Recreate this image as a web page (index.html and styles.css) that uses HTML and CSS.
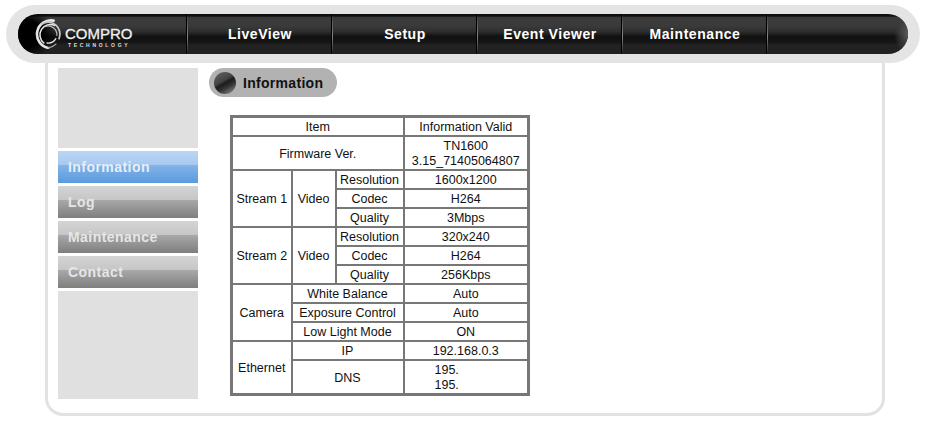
FILE: index.html
```html
<!DOCTYPE html>
<html lang="en">
<head>
    <meta charset="UTF-8">
    <title>Information</title>
    <link rel="stylesheet" href="styles.css">
</head>
<body>
    <div class="top-band">
        <div class="top-bar">
            <div class="logo">
                <svg class="logo-mark" width="30" height="30" viewBox="1 1 27.5 27.5" fill="none" stroke="#e4e4e4" stroke-linecap="round">
                    <path d="M19 2.5A12.5 12.5 0 0 0 14 27.5" stroke-width="2.4"/>
                    <path d="M8 5.5A11 11 0 0 1 24 19" stroke-width="1.6" stroke="#c8c8c8"/>
                    <path d="M21 24A11.5 11.5 0 0 1 14 27.5" stroke-width="1.2" stroke="#aaa"/>
                    <path d="M20 7A9.5 9.5 0 0 0 10 23" stroke-width="1.4"/>
                    <path d="M11 8A8 8 0 0 1 22 16" stroke-width="1.1" stroke="#bbb"/>
                    <path d="M21 19A8 8 0 0 1 13 23" stroke-width="1.2"/>
                </svg>
                <div class="logo-text">
                    <span class="logo-name">COMPRO</span>
                    <span class="logo-sub">TECHNOLOGY</span>
                </div>
            </div>
            <a class="top-link">LiveView</a>
            <a class="top-link">Setup</a>
            <a class="top-link">Event Viewer</a>
            <a class="top-link">Maintenance</a>
            <div class="top-rest"></div>
        </div>
    </div>

    <div class="frame">
        <div class="side">
            <div class="side-fill side-fill-top"></div>
            <a class="side-btn active">Information</a>
            <a class="side-btn">Log</a>
            <a class="side-btn">Maintenance</a>
            <a class="side-btn">Contact</a>
            <div class="side-fill"></div>
        </div>
        <div class="main">
            <div class="title-pill">
                <span class="ball"></span>
                <span>Information</span>
            </div>
            <table class="info">
                <colgroup>
                    <col class="col-a"><col class="col-b"><col class="col-c"><col class="col-d">
                </colgroup>
                <tr>
                    <td colspan="3">Item</td>
                    <td>Information Valid</td>
                </tr>
                <tr class="tall">
                    <td colspan="3">Firmware Ver.</td>
                    <td>TN1600<br>3.15_71405064807</td>
                </tr>
                <tr>
                    <td rowspan="3">Stream 1</td>
                    <td rowspan="3">Video</td>
                    <td>Resolution</td>
                    <td>1600x1200</td>
                </tr>
                <tr><td>Codec</td><td>H264</td></tr>
                <tr><td>Quality</td><td>3Mbps</td></tr>
                <tr>
                    <td rowspan="3">Stream 2</td>
                    <td rowspan="3">Video</td>
                    <td>Resolution</td>
                    <td>320x240</td>
                </tr>
                <tr><td>Codec</td><td>H264</td></tr>
                <tr><td>Quality</td><td>256Kbps</td></tr>
                <tr>
                    <td rowspan="3">Camera</td>
                    <td colspan="2">White Balance</td>
                    <td>Auto</td>
                </tr>
                <tr><td colspan="2">Exposure Control</td><td>Auto</td></tr>
                <tr><td colspan="2">Low Light Mode</td><td>ON</td></tr>
                <tr>
                    <td rowspan="2">Ethernet</td>
                    <td colspan="2">IP</td>
                    <td>192.168.0.3</td>
                </tr>
                <tr class="tall">
                    <td colspan="2">DNS</td>
                    <td class="dns">195.<br>195.</td>
                </tr>
            </table>
        </div>
    </div>
</body>
</html>
```

FILE: styles.css
```css
html, body {
    margin: 0;
    padding: 0;
    height: 423px;
    overflow: hidden;
    background: #fff;
    font-family: "Liberation Sans", Arial, sans-serif;
}
.top-band {
    box-sizing: border-box;
    margin: 5px 6px 0;
    width: 914px;
    height: 58px;
    padding: 9px 12px;
    background: #e4e4e4;
    border-radius: 29px;
}
.top-bar {
    display: flex;
    height: 40px;
    border-radius: 20px;
    overflow: hidden;
    background: linear-gradient(#0c0c0c 0, #111 5%, #3c3c3c 9%, #3a3a3a 30%, #2e2e2e 44%, #2a2a2a 46%, #111 56%, #151515 70%, #222 78%, #222 100%);
}
.logo {
    box-sizing: border-box;
    width: 168px;
    display: flex;
    align-items: flex-start;
    gap: 1px;
    padding: 5px 0 0 16px;
    background: radial-gradient(ellipse 40px 26px at 0 50%, #000 60%, rgba(0, 0, 0, 0) 100%);
}
.logo-mark {
    flex: none;
}
.logo-text {
    display: flex;
    flex-direction: column;
    color: #f0f0f0;
    margin-top: 8px;
}
.logo-name {
    font-size: 15px;
    line-height: 14px;
    -webkit-text-stroke: 0.3px #f0f0f0;
}
.logo-sub {
    font-size: 5px;
    line-height: 6px;
    font-weight: bold;
    letter-spacing: 2.7px;
    margin: 1px 0 0 3px;
    color: #ddd;
}
.top-link, .top-rest {
    box-sizing: border-box;
    border-left: 1px solid #000;
    background: linear-gradient(rgba(120, 120, 120, 0), #888 55%, rgba(120, 120, 120, 0)) 0 0 / 1px 100% no-repeat;
}
.top-link {
    width: 145px;
    padding-left: 2px;
    color: #fff;
    font-size: 14px;
    font-weight: bold;
    letter-spacing: 0.55px;
    line-height: 40px;
    text-align: center;
}
.top-rest {
    flex: 1;
    position: relative;
}
.top-rest::after {
    content: "";
    position: absolute;
    top: 0;
    right: 0;
    width: 32px;
    height: 100%;
    background: radial-gradient(ellipse 14px 20px at 100% 50%, #5a5a5a 0, rgba(60, 60, 60, 0.6) 70%, rgba(0, 0, 0, 0) 100%);
}

.frame {
    box-sizing: border-box;
    display: flex;
    width: 840px;
    height: 353px;
    margin-left: 45px;
    padding: 5px 10px;
    border: 3px solid #e2e2e2;
    border-top: none;
    border-radius: 0 0 18px 18px;
}
.side {
    width: 140px;
    display: flex;
    flex-direction: column;
    gap: 3px;
}
.side-fill {
    height: 108px;
    background: #e0e0e0;
}
.side-fill-top {
    height: 80px;
}
.side-btn {
    height: 32px;
    padding-left: 10px;
    font-size: 14px;
    font-weight: bold;
    letter-spacing: 0.45px;
    line-height: 32px;
    color: #e6e6e6;
    background: linear-gradient(#d4d4d4 0, #c6c6c6 44%, #a8a8a8 45%, #7e7e7e 100%);
}
.side-btn.active {
    color: #e6eef8;
    background: linear-gradient(#bcd6f4 0, #a6c8f0 44%, #83b3e8 45%, #5a9ade 100%);
}
.main {
    margin-left: 11px;
}
.title-pill {
    box-sizing: border-box;
    width: 128px;
    height: 29px;
    display: flex;
    align-items: center;
    gap: 7px;
    padding-left: 5px;
    border-radius: 15px;
    background: #b2b2b2;
    color: #111;
    font-size: 14px;
    font-weight: bold;
    letter-spacing: 0.3px;
}
.ball {
    width: 22px;
    height: 22px;
    border-radius: 50%;
    background: linear-gradient(150deg, #666 0, #444 40%, #1c1c1c 50%, #333 65%, #999 100%);
}
.info {
    margin: 18px 0 0 21px;
    width: 299px;
    table-layout: fixed;
    border-collapse: collapse;
    border: 3px solid #777;
    font-size: 12.5px;
    color: #111;
}
.info td {
    box-sizing: border-box;
    height: 19px;
    padding: 2px 0 0;
    border: 2px solid #777;
    line-height: 15px;
    text-align: center;
}
.info .tall td {
    height: 34px;
}
.info td.dns {
    padding-left: 30px;
    text-align: left;
}
.col-a { width: 60px; }
.col-b { width: 44px; }
.col-c { width: 68px; }
.col-d { width: 125px; }
```
